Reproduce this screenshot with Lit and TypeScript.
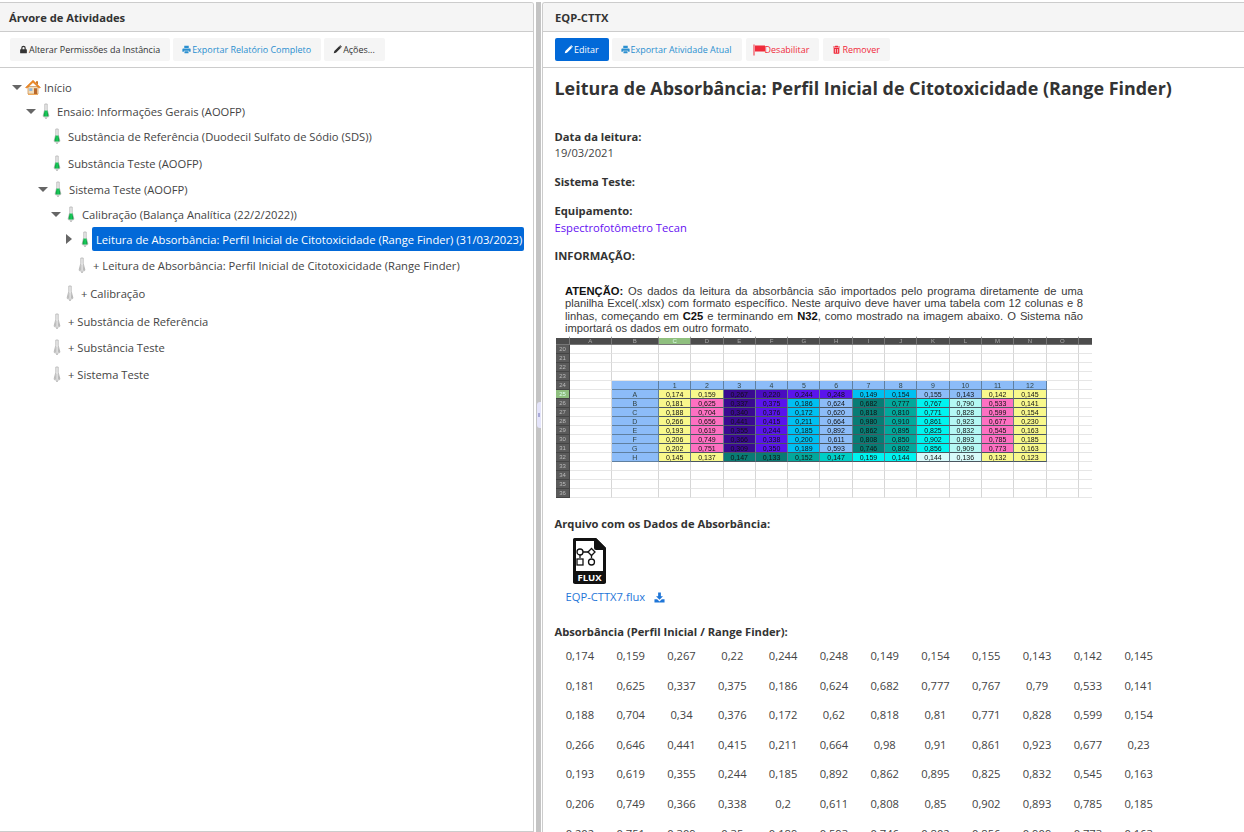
import { LitElement, html, css, svg } from "lit";
import { customElement } from "lit/decorators.js";

// tree rows: x = left offset, h = row height, caret = open/closed/none
const tree = [
  { x: 12, h: 24, caret: "down", icon: "home", label: "Início" },
  { x: 26, h: 24, caret: "down", icon: "green", label: "Ensaio: Informações Gerais (AOOFP)" },
  { x: 53, h: 26, caret: "", icon: "green", label: "Substância de Referência (Duodecil Sulfato de Sódio (SDS))" },
  { x: 53, h: 28, caret: "", icon: "green", label: "Substância Teste (AOOFP)" },
  { x: 38, h: 24, caret: "down", icon: "green", label: "Sistema Teste (AOOFP)" },
  { x: 51, h: 26, caret: "down", icon: "green", label: "Calibração (Balança Analítica (22/2/2022))" },
  { x: 65, h: 24, caret: "right", icon: "green", label: "Leitura de Absorbância: Perfil Inicial de Citotoxicidade (Range Finder) (31/03/2023)", selected: true },
  { x: 78, h: 28, caret: "", icon: "grey", label: "+ Leitura de Absorbância: Perfil Inicial de Citotoxicidade (Range Finder)" },
  { x: 66, h: 28, caret: "", icon: "grey", label: "+ Calibração" },
  { x: 53, h: 28, caret: "", icon: "grey", label: "+ Substância de Referência" },
  { x: 53, h: 24, caret: "", icon: "grey", label: "+ Substância Teste" },
  { x: 53, h: 30, caret: "", icon: "grey", label: "+ Sistema Teste" },
];

const absorbance = [
  ["0,174", "0,159", "0,267", "0,22", "0,244", "0,248", "0,149", "0,154", "0,155", "0,143", "0,142", "0,145"],
  ["0,181", "0,625", "0,337", "0,375", "0,186", "0,624", "0,682", "0,777", "0,767", "0,79", "0,533", "0,141"],
  ["0,188", "0,704", "0,34", "0,376", "0,172", "0,62", "0,818", "0,81", "0,771", "0,828", "0,599", "0,154"],
  ["0,266", "0,646", "0,441", "0,415", "0,211", "0,664", "0,98", "0,91", "0,861", "0,923", "0,677", "0,23"],
  ["0,193", "0,619", "0,355", "0,244", "0,185", "0,892", "0,862", "0,895", "0,825", "0,832", "0,545", "0,163"],
  ["0,206", "0,749", "0,366", "0,338", "0,2", "0,611", "0,808", "0,85", "0,902", "0,893", "0,785", "0,185"],
  ["0,202", "0,751", "0,309", "0,35", "0,189", "0,593", "0,746", "0,802", "0,856", "0,909", "0,773", "0,163"],
];

// the pasted spreadsheet image
const C: Record<string, string> = {
  y: "#f8f88c", k: "#fd70c2", d: "#3a0a90", e: "#4a0cc0", p: "#5a14ec", c: "#00c0f2",
  b: "#8cbcf8", t: "#087c74", u: "#02a89c", v: "#00cfc6", i: "#00f4f0", l: "#b4f8f4", x: "#d8fafa",
};
const sheet: [string, string, string[], string[]][] = [
  ["A", "yydepp", ["0,174", "0,159", "0,267", "0,220", "0,244", "0,248"], ["0,149", "0,154", "0,155", "0,143", "0,142", "0,145"]],
  ["B", "ykdpcb", ["0,181", "0,625", "0,337", "0,375", "0,186", "0,624"], ["0,682", "0,777", "0,767", "0,790", "0,533", "0,141"]],
  ["C", "ykdpcb", ["0,188", "0,704", "0,340", "0,376", "0,172", "0,620"], ["0,818", "0,810", "0,771", "0,828", "0,599", "0,154"]],
  ["D", "ykdpcb", ["0,266", "0,656", "0,441", "0,415", "0,211", "0,664"], ["0,980", "0,910", "0,861", "0,923", "0,677", "0,230"]],
  ["E", "ykdpcb", ["0,193", "0,619", "0,355", "0,244", "0,185", "0,892"], ["0,862", "0,895", "0,825", "0,832", "0,545", "0,163"]],
  ["F", "ykdpcb", ["0,206", "0,749", "0,366", "0,338", "0,200", "0,611"], ["0,808", "0,850", "0,902", "0,893", "0,785", "0,185"]],
  ["G", "ykdpcb", ["0,202", "0,751", "0,309", "0,350", "0,189", "0,593"], ["0,746", "0,802", "0,856", "0,909", "0,773", "0,163"]],
  ["H", "yyttuv", ["0,145", "0,137", "0,147", "0,133", "0,152", "0,147"], ["0,159", "0,144", "0,144", "0,136", "0,132", "0,123"]],
];
const sheetRight: Record<string, string> = {
  A: "ccbbyy", B: "tuilky", C: "tuilky", D: "tuilky", E: "tuilky", F: "tuilky", G: "tuilky", H: "iixxyy",
};
const letters = ["A", "B", "C", "D", "E", "F", "G", "H", "I", "J", "K", "L", "M", "N", "O", ""];

const flask = (green: boolean) => html`<svg class="flask" width="8" height="16" viewBox="0 0 8 16">
  <defs>
    <linearGradient id="g${green ? "a" : "b"}" x1="0" x2="1">
      <stop offset="0" stop-color="${green ? "#0c9a3c" : "#a8a8a8"}"></stop>
      <stop offset="0.55" stop-color="${green ? "#18cf5c" : "#e4e4e4"}"></stop>
      <stop offset="1" stop-color="${green ? "#0f8a3a" : "#9a9a9a"}"></stop>
    </linearGradient>
  </defs>
  <path d="M2.800 1h2.400v5.200l1.600 6.300q.3 1.500-1.200 1.500H2.400q-1.500 0-1.200-1.500L2.800 6.200z" fill="#ececec" stroke="#b4b4b4" stroke-width=".8"></path>
  <path d="M2.600 7.500h2.800l1.100 5q.2 1-.9 1H2.400q-1.100 0-.9-1z" fill="url(#g${green ? "a" : "b"})"></path>
  <path d="M3 14.400h2v1.300H3z" fill="#b5b5b5"></path>
</svg>`;

const house = html`<svg class="house" width="16" height="16" viewBox="0 0 16 16">
  <path d="M3 7.500h10V15H3z" fill="#f3ddb9" stroke="#c98a4a" stroke-width=".7"></path>
  <path d="M.5 8.500 8 1.200l7.500 7.300-1.500.6L8 3.500 2 9.100z" fill="#ee8a22" stroke="#d96f12" stroke-width=".5"></path>
  <path d="M11 2.300h2v3.500l-2-1.800z" fill="#c9772a"></path>
  <path d="M4.300 9.300h3v2.600h-3z" fill="#8fb8e0"></path>
  <path d="M9 9.300h3V15H9z" fill="#b9682b"></path>
  <path d="M3 15h10v.8H3z" fill="#ef9a3a"></path>
</svg>`;

const ICONS: Record<string, unknown> = {
  lock: svg`<path d="M3 5.500V4a3 3 0 0 1 6 0v1.500h.8a.7.7 0 0 1 .7.700v4.100a.7.7 0 0 1-.7.700H2.200a.7.7 0 0 1-.7-.7V6.200a.7.7 0 0 1 .7-.7zm1.600 0h2.800V4a1.400 1.400 0 0 0-2.800 0z"></path>`,
  print: svg`<path d="M3 1h6v3H3zM1.500 4.800h9a1 1 0 0 1 1 1V9H9.500V7.500h-7V9H.5V5.800a1 1 0 0 1 1-1zM3.300 8.300h5.400V11H3.300z"></path>`,
  pencil: svg`<path d="M8.500 1.300 10.700 3.500 4 10.200 1 11l.8-3zM9.200.6a.8.8 0 0 1 1.100 0l1.100 1.100a.8.8 0 0 1 0 1.100l-.4.400L8.800 1z"></path>`,
  trash: svg`<path d="M4.300 1h3.400l.4 1h2.400v1.400h-9V2h2.400zM2.200 4h7.600v6.800a.8.800 0 0 1-.8.800H3a.8.800 0 0 1-.8-.8zm1.700 1.400v4.800h1V5.400zm3.200 0v4.800h1V5.400z"></path>`,
  download: svg`<path d="M4.500.5h3v4.200h2.300L6 8.500 2.200 4.700h2.300zM.5 8h3l2.500 2.300L8.500 8h3v3.500H.5z"></path>`,
};
const icon = (name: string) => html`<svg class="ico" width="12" height="12" viewBox="0 0 12 12" fill="currentColor">${ICONS[name]}</svg>`;

@customElement("app-root")
export class AppRoot extends LitElement {
  static styles = css`
    :host {
      display: block;
      height: 832px;
      overflow: hidden;
      font-family: "Open Sans", sans-serif;
      font-size: 11.2px;
      color: #333;
      background: #fff;
    }
    * { box-sizing: border-box; }
    .layout { display: flex; height: 832px; padding-top: 2px; }
    .panel {
      border: 1px solid #ccc;
      border-bottom: 0;
      background: #fff;
      height: 830px;
      overflow: hidden;
    }
    .left { width: 534px; border-left: 0; border-radius: 0 3px 0 0; border-bottom: 1px solid #ccc; }
    .right { width: 702px; border-right: 0; border-radius: 3px 0 0 0; margin-left: 1px; }
    .splitter {
      width: 5px;
      margin-left: 2px;
      background: #c4c4c4;
      display: flex;
      align-items: center;
      padding-bottom: 4px;
    }
    .grip {
      width: 4px;
      height: 26px;
      margin-left: 1px;
      background: #e4e4fa;
      border-radius: 3px 0 0 3px;
      display: flex;
      align-items: center;
      justify-content: center;
    }
    .grip i { width: 2px; height: 4px; background: #a9a9d8; }
    .head {
      height: 29px;
      background: #f5f5f5;
      border-bottom: 1px solid #ccc;
      padding: 0 9px;
      display: flex;
      align-items: center;
      font-weight: 700;
      font-size: 11.2px;
      color: #333;
    }
    .right .head { padding-left: 12px; }
    .bar {
      height: 36px;
      border-bottom: 1px solid #ccc;
      padding: 6px 0 0 10px;
      display: flex;
      gap: 3px;
    }
    .right .bar { padding-left: 12px; }
    .btn {
      height: 23px;
      background: #f5f5f5;
      border-radius: 2px;
      padding: 0 10px 0 9px;
      display: flex;
      align-items: center;
      gap: 1px;
      font-size: 8.960px;
      color: #333;
      white-space: nowrap;
    }
    .btn .ico { width: 9px; height: 9px; flex: none; }
    .btn.info { color: #2a8fd0; }
    .btn.danger { color: #f02a3a; margin-left: 1px; }
    .btn.primary { background: #0269d8; color: #fff; }
    .btn.flagged { padding: 0 10px 0 7px; gap: 0; }

    .tree { padding-top: 7px; }
    .node { display: flex; align-items: center; font-size: 11.2px; color: #444; white-space: nowrap; }
    .caret { width: 16px; flex: none; display: flex; }
    .caret.down::before {
      content: "";
      border-left: 5px solid transparent;
      border-right: 5px solid transparent;
      border-top: 5px solid #666;
      margin-top: 1px;
    }
    .caret.right::before {
      content: "";
      border-top: 5px solid transparent;
      border-bottom: 5px solid transparent;
      border-left: 6px solid #666;
    }
    .caret.right { width: 15px; }
    .caret.home { width: 13px; }
    .flask, .house { flex: none; }
    .house { margin-right: 3px; }
    .flask { margin-right: 7px; }
    .sel {
      background: #0269d8;
      color: #fff;
      width: 432px;
      height: 24px;
      display: flex;
      align-items: center;
      padding-left: 4px;
      border-radius: 2px;
      margin-left: -4px;
    }

    .content { padding: 0 12px 0 11.5px; }
    h1 { margin: 0; font-size: 17.920px; line-height: 24px; padding-top: 8px; font-weight: 700; color: #333; }
    .lbl { font-weight: 700; font-size: 11.2px; line-height: 16px; color: #333; }
    .val { font-size: 11.2px; line-height: 16px; color: #444; }
    .val.link { color: #6610f2; padding-top: 1px; }
    .f1 { padding-top: 29px; }
    .f2 { padding-top: 13px; }
    .f3 { padding-top: 13px; }
    .f4 { padding-top: 12px; }
    .note {
      font-family: "Liberation Sans", sans-serif;
      font-size: 11.2px;
      line-height: 12.300px;
      color: #3a3a3a;
      text-align: justify;
      width: 518px;
      margin: 21px 0 0 10.5px;
    }
    .note b { color: #111; }

    .sheet {
      margin: 2px 0 0 1.5px;
      width: 536px;
      height: 162px;
      display: grid;
      grid-template-columns: 14px 41.500px 47.500px repeat(14, 32.300px);
      grid-auto-rows: 9px;
      font-family: "Liberation Sans", sans-serif;
      font-size: 7px;
      line-height: 9px;
      text-align: center;
      filter: blur(0.45px);
      color: #222;
      overflow: hidden;
    }
    .sheet div { border-right: 1px solid #d6d6d6; border-bottom: 1px solid #e6e6e6; }
    .sheet .top { background: #4c4c4c; color: #aaa; border-color: #777; font-size: 6px; border-top: 2px solid #fff; line-height: 7px; }
    .sheet .top.on { background: #8fbf7f; color: #dfe; }
    .sheet .rowh { background: #5a5a5a; color: #bbb; font-size: 6px; border-color: #444; }
    .sheet .rowh.on { background: #8fbf7f; color: #dfe; }
    .sheet .cell { border: 0; border-right: 1px solid #6a7a8a; border-bottom: 1px solid #4a5660; color: #111; }
    .sheet .hdr { background: #8cbcf8; border-right: 1px solid #5f7f9f; border-bottom: 1px solid #5f7f9f; color: #344; }

    .f5 { padding-top: 18px; }
    .file { width: 112px; padding-top: 6px; }
    .file-icon { display: block; margin-left: 18px; }
    .file-link { display: flex; align-items: center; gap: 9px; color: #1f76d8; font-size: 11.2px; line-height: 16px; padding: 5px 0 0 11px; white-space: nowrap; }
    .file-link .ico { width: 11px; height: 11px; }
    .f6 { padding-top: 19px; }
    .grid {
      display: grid;
      grid-template-columns: repeat(12, 50.800px);
      grid-auto-rows: 29.600px;
      margin-top: 0.5px;
      font-size: 11.2px;
      color: #444;
      text-align: center;
      align-items: center;
      width: 610px;
    }
  `;

  renderNode(n: (typeof tree)[number]) {
    const caret = n.caret ? html`<span class="caret ${n.caret} ${n.icon === "home" ? "home" : ""}"></span>` : "";
    return html`<div class="node" style="height:${n.h}px;padding-left:${n.x}px">
      ${caret}
      ${n.icon === "home" ? house : flask(n.icon === "green")}
      ${n.selected ? html`<span class="sel">${n.label}</span>` : html`<span>${n.label}</span>`}
    </div>`;
  }

  renderSheet() {
    const cells = [];
    cells.push(html`<div class="top"></div>`);
    letters.forEach((l) => cells.push(html`<div class="top ${l === "C" ? "on" : ""}">${l}</div>`));
    for (let r = 20; r <= 36; r++) {
      cells.push(html`<div class="rowh ${r === 25 ? "on" : ""}">${r}</div>`);
      const dataRow = r >= 25 && r <= 32 ? sheet[r - 25] : null;
      for (let c = 0; c < 16; c++) {
        if (r === 24 && c === 1) cells.push(html`<div class="hdr"></div>`);
        else if (r === 24 && c >= 2 && c <= 13) cells.push(html`<div class="hdr">${c - 1}</div>`);
        else if (dataRow && c === 1) cells.push(html`<div class="hdr">${dataRow[0]}</div>`);
        else if (dataRow && c >= 2 && c <= 13) {
          const i = c - 2;
          const left = i < 6;
          const code = left ? dataRow[1][i] : sheetRight[dataRow[0]][i - 6];
          const val = left ? dataRow[2][i] : dataRow[3][i - 6];
          cells.push(html`<div class="cell" style="background:${C[code]}">${val}</div>`);
        } else cells.push(html`<div></div>`);
      }
    }
    return html`<div class="sheet">${cells}</div>`;
  }

  render() {
    return html`<div class="layout">
      <section class="panel left">
        <div class="head">Árvore de Atividades</div>
        <div class="bar">
          <span class="btn">${icon("lock")}Alterar Permissões da Instância</span>
          <span class="btn info">${icon("print")}Exportar Relatório Completo</span>
          <span class="btn">${icon("pencil")}Ações...</span>
        </div>
        <div class="tree">${tree.map((n) => this.renderNode(n))}</div>
      </section>
      <div class="splitter"><div class="grip"><i></i></div></div>
      <section class="panel right">
        <div class="head">EQP-CTTX</div>
        <div class="bar">
          <span class="btn primary">${icon("pencil")}Editar</span>
          <span class="btn info">${icon("print")}Exportar Atividade Atual</span>
          <span class="btn danger flagged"><svg width="12" height="12" viewBox="0 0 12 12" fill="currentColor"><path d="M.5.5h1v11h-1zM2 1.500h10v6H2z"></path></svg>Desabilitar</span>
          <span class="btn danger">${icon("trash")}Remover</span>
        </div>
        <div class="content">
          <h1>Leitura de Absorbância: Perfil Inicial de Citotoxicidade (Range Finder)</h1>
          <div class="f1">
            <div class="lbl">Data da leitura:</div>
            <div class="val">19/03/2021</div>
          </div>
          <div class="f2"><div class="lbl">Sistema Teste:</div></div>
          <div class="f3">
            <div class="lbl">Equipamento:</div>
            <div class="val link">Espectrofotômetro Tecan</div>
          </div>
          <div class="f4"><div class="lbl">INFORMAÇÃO:</div></div>
          <p class="note"><b>ATENÇÃO:</b> Os dados da leitura da absorbância são importados pelo programa diretamente de uma planilha Excel(.xlsx) com formato específico. Neste arquivo deve haver uma tabela com 12 colunas e 8 linhas, começando em <b>C25</b> e terminando em <b>N32</b>, como mostrado na imagem abaixo. O Sistema não importará os dados em outro formato.</p>
          ${this.renderSheet()}
          <div class="f5"><div class="lbl">Arquivo com os Dados de Absorbância:</div></div>
          <div class="file">
            <svg class="file-icon" width="33" height="46" viewBox="0 0 33 46">
              <path d="M1.500 1.500h21l9 9v33h-30z" fill="#fff" stroke="#111" stroke-width="3" stroke-linejoin="round"></path>
              <path d="M21 0h2l10 10v2H23a2 2 0 0 1-2-2z" fill="#111"></path>
              <rect x="0" y="33" width="33" height="13" rx="2" fill="#111"></rect>
              <g fill="#fff" stroke="#111" stroke-width="1.300">
                <path d="M10 14h5M7 17v3M18.500 17v3" fill="none"></path>
                <circle cx="7" cy="14" r="3"></circle>
                <path d="M18.500 10.500l3.500 3.500-3.500 3.500-3.500-3.500z"></path>
                <rect x="4" y="21" width="6" height="6"></rect>
                <circle cx="18.500" cy="24" r="3"></circle>
              </g>
              <text x="16.500" y="43" text-anchor="middle" font-family="Open Sans" font-weight="700" font-size="9.500" fill="#fff">FLUX</text>
            </svg>
            <div class="file-link">EQP-CTTX7.flux ${icon("download")}</div>
          </div>
          <div class="f6"><div class="lbl">Absorbância (Perfil Inicial / Range Finder):</div></div>
          <div class="grid">${absorbance.flat().map((v) => html`<span>${v}</span>`)}</div>
        </div>
      </section>
    </div>`;
  }
}
